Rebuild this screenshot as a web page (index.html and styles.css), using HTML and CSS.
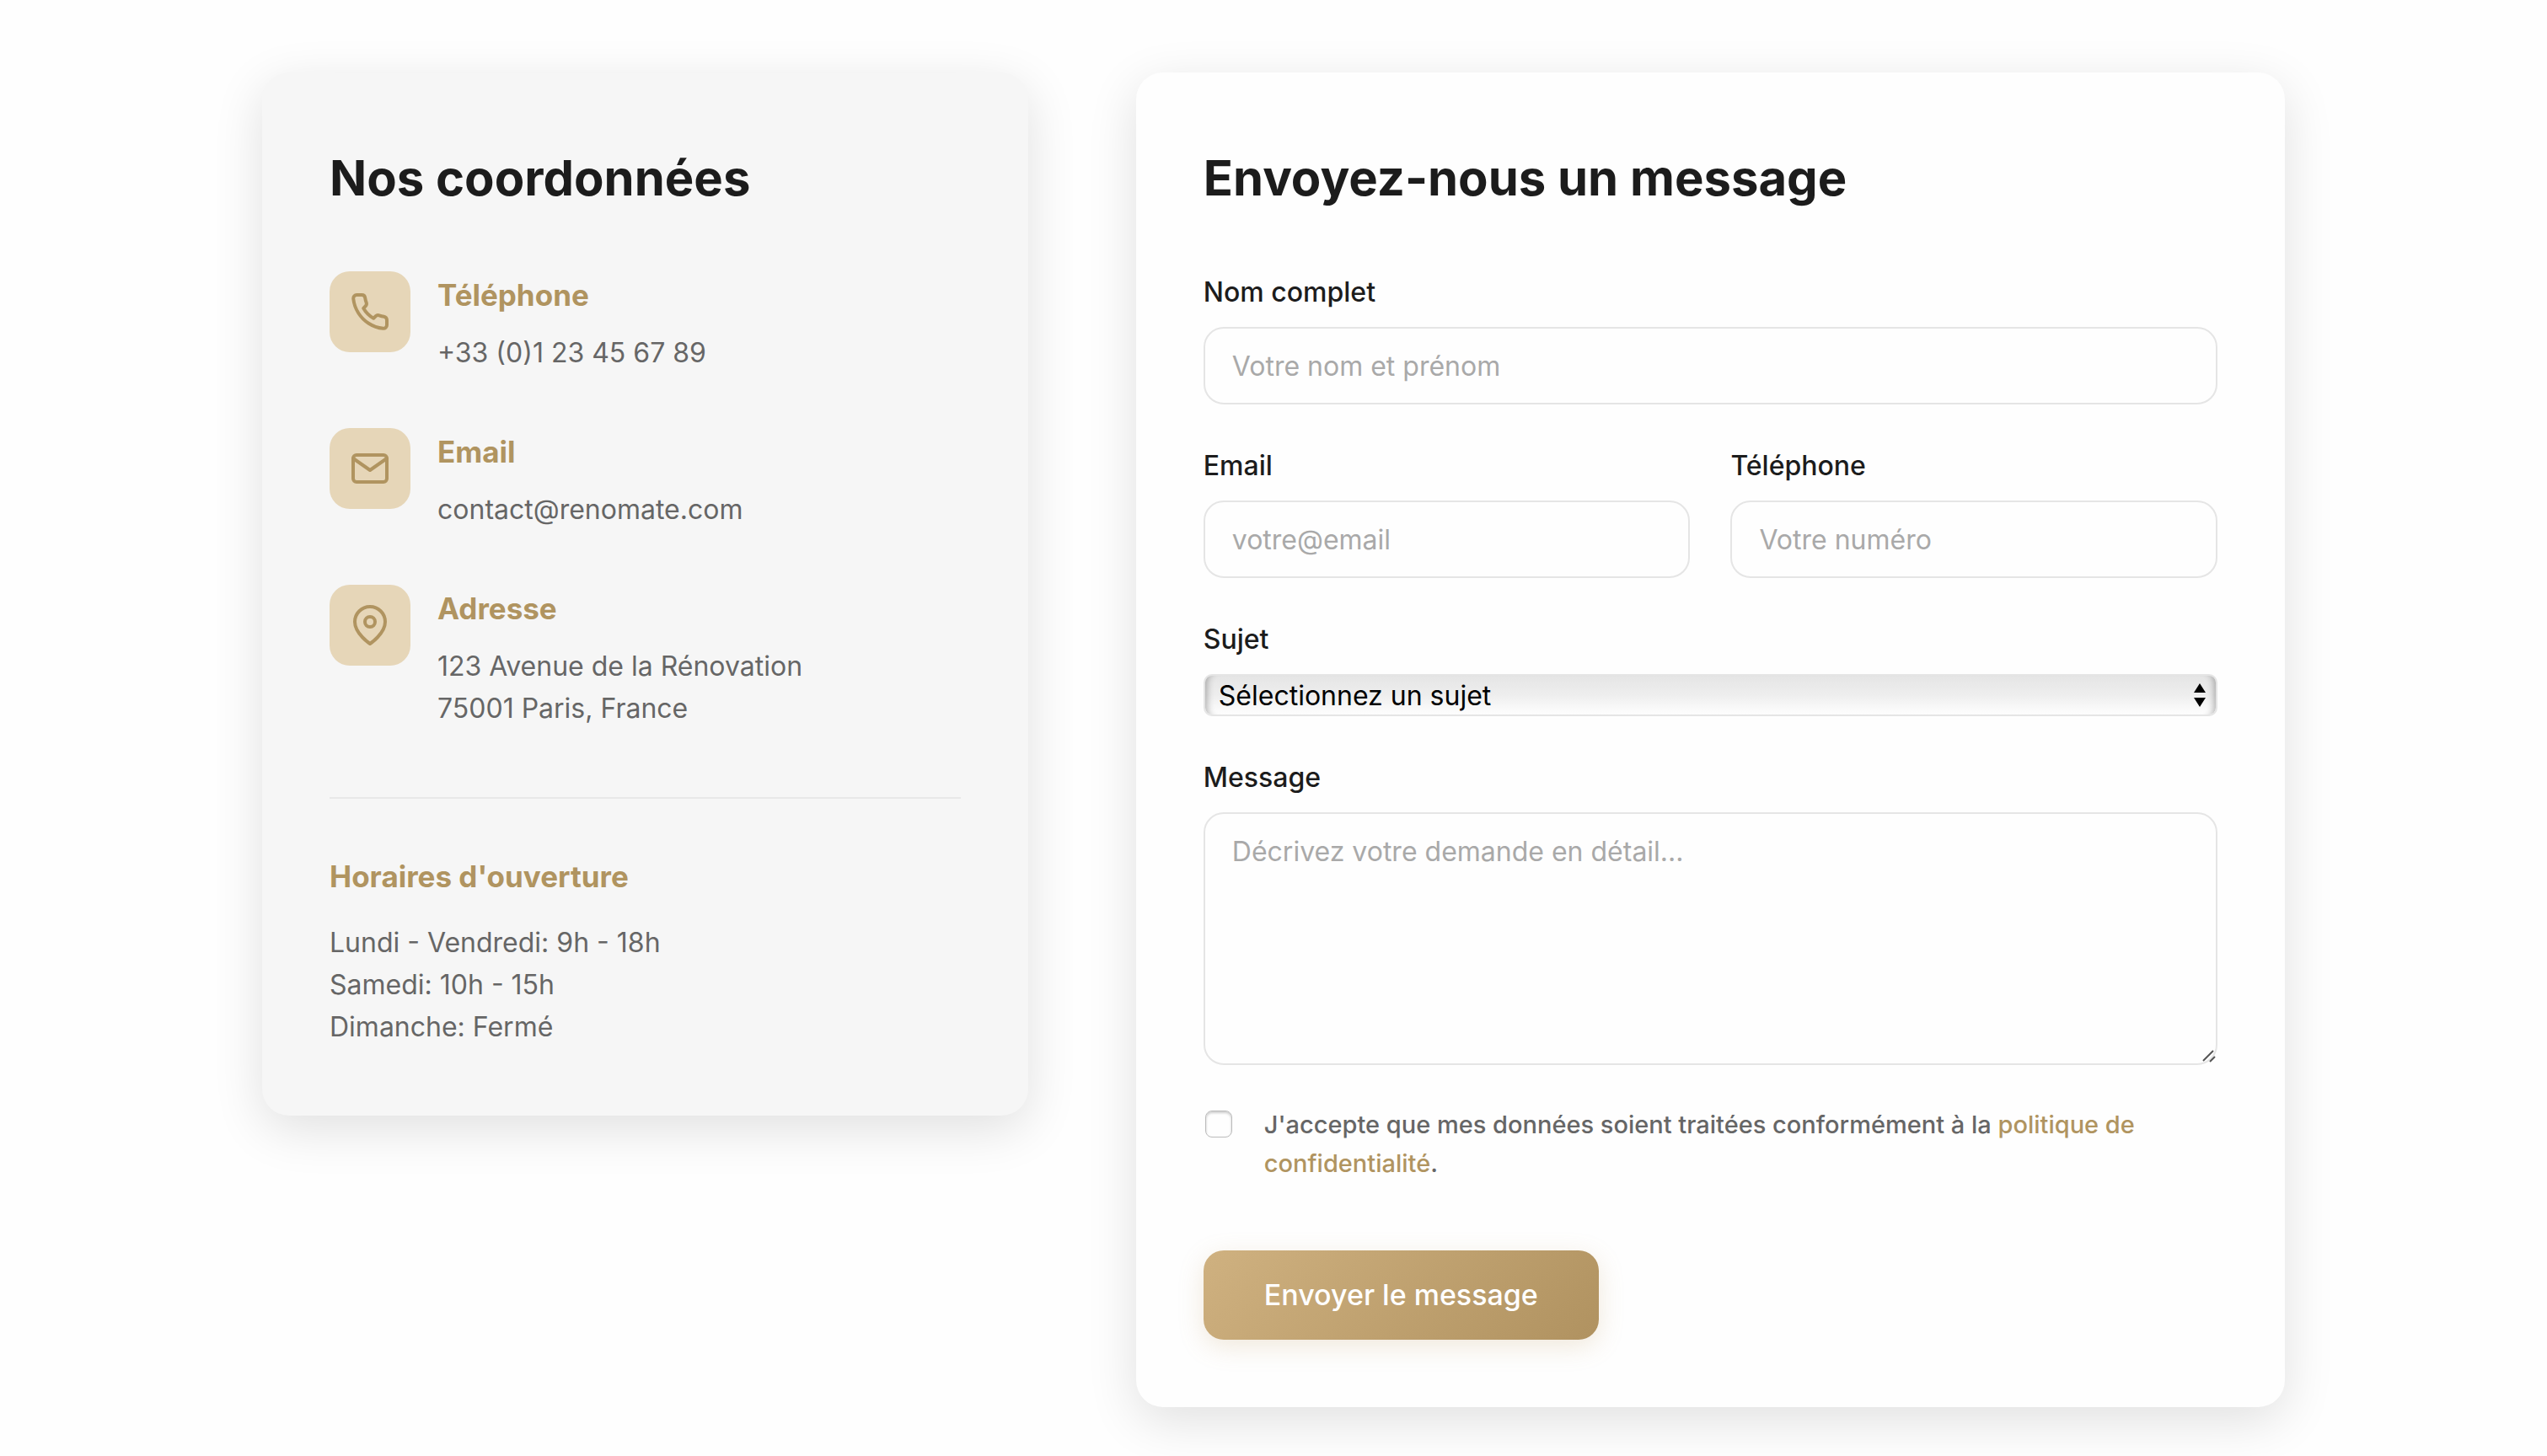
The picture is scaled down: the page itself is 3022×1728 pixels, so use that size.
FILE: index.html
```html
<!DOCTYPE html>
<html lang="fr">
<head>
    <meta charset="UTF-8">
    <meta name="viewport" content="width=device-width, initial-scale=1.0">
    <title>Contact - Renomate</title>
    <link rel="stylesheet" href="styles.css">
</head>
<body>
    <main class="contact-container">
        <!-- Contact details -->
        <section class="contact-card contact-info">
            <h2>Nos coordonnées</h2>

            <div class="info-list">
                <div class="info-item">
                    <div class="info-icon">
                        <svg viewBox="0 0 24 24" aria-hidden="true">
                            <path d="M22 16.92v3a2 2 0 0 1-2.18 2 19.79 19.79 0 0 1-8.63-3.07 19.5 19.5 0 0 1-6-6 19.79 19.79 0 0 1-3.07-8.67A2 2 0 0 1 4.11 2h3a2 2 0 0 1 2 1.72 12.84 12.84 0 0 0 .7 2.81 2 2 0 0 1-.45 2.11L8.09 9.91a16 16 0 0 0 6 6l1.27-1.27a2 2 0 0 1 2.11-.45 12.84 12.84 0 0 0 2.81.7A2 2 0 0 1 22 16.92z"/>
                        </svg>
                    </div>
                    <div>
                        <h3>Téléphone</h3>
                        <p>+33 (0)1 23 45 67 89</p>
                    </div>
                </div>

                <div class="info-item">
                    <div class="info-icon">
                        <svg viewBox="0 0 24 24" aria-hidden="true">
                            <path d="M4 4h16c1.1 0 2 .9 2 2v12c0 1.1-.9 2-2 2H4c-1.1 0-2-.9-2-2V6c0-1.1.9-2 2-2z"/>
                            <polyline points="22,6 12,13 2,6"/>
                        </svg>
                    </div>
                    <div>
                        <h3>Email</h3>
                        <p>contact@renomate.com</p>
                    </div>
                </div>

                <div class="info-item">
                    <div class="info-icon">
                        <svg viewBox="0 0 24 24" aria-hidden="true">
                            <path d="M21 10c0 7-9 13-9 13s-9-6-9-13a9 9 0 0 1 18 0z"/>
                            <circle cx="12" cy="10" r="3"/>
                        </svg>
                    </div>
                    <div>
                        <h3>Adresse</h3>
                        <p>123 Avenue de la Rénovation<br>75001 Paris, France</p>
                    </div>
                </div>
            </div>

            <div class="opening-hours">
                <h3>Horaires d'ouverture</h3>
                <p>Lundi - Vendredi: 9h - 18h</p>
                <p>Samedi: 10h - 15h</p>
                <p>Dimanche: Fermé</p>
            </div>
        </section>

        <!-- Contact form -->
        <section class="contact-card">
            <h2>Envoyez-nous un message</h2>

            <form class="contact-form">
                <div class="form-group">
                    <label for="name">Nom complet</label>
                    <input type="text" id="name" name="name" placeholder="Votre nom et prénom">
                </div>

                <div class="form-row">
                    <div class="form-group">
                        <label for="email">Email</label>
                        <input type="email" id="email" name="email" placeholder="votre@email">
                    </div>
                    <div class="form-group">
                        <label for="phone">Téléphone</label>
                        <input type="tel" id="phone" name="phone" placeholder="Votre numéro">
                    </div>
                </div>

                <div class="form-group">
                    <label for="subject">Sujet</label>
                    <div class="select-wrap">
                        <select id="subject" name="subject">
                            <option>Sélectionnez un sujet</option>
                        </select>
                        <svg class="select-arrows" viewBox="0 0 14 28" aria-hidden="true">
                            <path d="M7 0l7 11H0zM7 28l7-11H0z"/>
                        </svg>
                    </div>
                </div>

                <div class="form-group">
                    <label for="message">Message</label>
                    <div class="textarea-wrap">
                        <textarea id="message" name="message" placeholder="Décrivez votre demande en détail..."></textarea>
                        <svg class="resize-grip" viewBox="0 0 16 16" aria-hidden="true">
                            <path d="M1 13L13 1M9 14L15 8"/>
                        </svg>
                    </div>
                </div>

                <div class="form-checkbox">
                    <input type="checkbox" id="privacy" name="privacy">
                    <label for="privacy">J'accepte que mes données soient traitées conformément à la <a href="#">politique de confidentialité</a>.</label>
                </div>

                <button type="submit" class="btn-submit">Envoyer le message</button>
            </form>
        </section>
    </main>
</body>
</html>
```

FILE: styles.css
```css
/* Basic reset */
* {
    margin: 0;
    padding: 0;
    box-sizing: border-box;
}

body {
    font-family: Inter, 'Helvetica Neue', Arial, sans-serif;
    font-size: 32px;
    line-height: 50px;
    background-color: #fefefe;
    color: #1c1c1c;
}

.contact-container {
    display: grid;
    grid-template-columns: 1fr 1.5fr;
    align-items: start;
    gap: 128px;
    max-width: 2400px;
    margin: 0 auto;
    padding: 86px 0 58px;
}

.contact-card {
    padding: 80px;
    background-color: #fefefe;
    border-radius: 32px;
    box-shadow: 0 16px 60px rgba(0, 0, 0, 0.12);
}

.contact-info {
    background-color: #f6f6f6;
}

h2 {
    font-size: 58px;
    line-height: 90px;
    font-weight: 700;
    margin-bottom: 66px;
}

h3 {
    font-size: 35px;
    line-height: 56px;
    font-weight: 700;
    margin-bottom: 16px;
    color: #b09460;
}

p {
    color: #666;
}

/* Contact details */
.info-list {
    display: flex;
    flex-direction: column;
    gap: 64px;
}

.info-item {
    display: flex;
    align-items: flex-start;
    gap: 32px;
}

.info-icon {
    display: flex;
    align-items: center;
    justify-content: center;
    flex-shrink: 0;
    width: 96px;
    height: 96px;
    border-radius: 24px;
    background-color: #e6d6b8;
}

.info-icon svg {
    width: 48px;
    height: 48px;
    fill: none;
    stroke: #b09460;
    stroke-width: 2;
    stroke-linecap: round;
    stroke-linejoin: round;
}

.opening-hours {
    margin-top: 80px;
    padding-top: 64px;
    border-top: 2px solid #e8e8e8;
}

.opening-hours h3 {
    margin-bottom: 26px;
}

/* Form */
.contact-form {
    display: flex;
    flex-direction: column;
    gap: 48px;
}

.form-row {
    display: grid;
    grid-template-columns: 1fr 1fr;
    gap: 48px;
}

.form-group label {
    display: block;
    font-weight: 500;
    margin-bottom: 16px;
}

input,
select,
textarea,
button {
    font-family: inherit;
    font-size: 32px;
}

.form-group input,
.form-group textarea {
    display: block;
    width: 100%;
    padding: 20px 32px;
    border: 2px solid #e5e5e5;
    border-radius: 24px;
    background-color: #fefefe;
    color: #1c1c1c;
}

.form-group input {
    height: 92px;
}

.form-group textarea {
    height: 300px;
    line-height: 50px;
    resize: none;
}

.form-group ::placeholder {
    color: #a9a9a9;
}

.select-wrap,
.textarea-wrap {
    position: relative;
}

select {
    display: block;
    appearance: none;
    width: 100%;
    height: 50px;
    padding: 0 48px 0 16px;
    border: 2px solid #e5e5e5;
    border-radius: 10px;
    background: linear-gradient(#e5e5e5, #eee 50%, #fefefe);
    box-shadow: inset 10px 0 8px -8px rgba(0, 0, 0, 0.3), inset -10px 0 8px -8px rgba(0, 0, 0, 0.3);
    color: #000;
}

.select-arrows {
    position: absolute;
    top: 11px;
    right: 14px;
    width: 14px;
    height: 28px;
    pointer-events: none;
}

.resize-grip {
    position: absolute;
    right: 2px;
    bottom: 2px;
    width: 16px;
    height: 16px;
    fill: none;
    stroke: #555;
    stroke-width: 2;
    pointer-events: none;
}

.form-checkbox {
    display: flex;
    align-items: flex-start;
    gap: 36px;
    margin-bottom: 32px;
}

.form-checkbox input {
    appearance: none;
    flex-shrink: 0;
    width: 32px;
    height: 32px;
    margin: 6px 2px;
    border: 1px solid #bbb;
    border-radius: 8px;
    box-shadow: inset 0 2px 3px rgba(0, 0, 0, 0.2);
}

.form-checkbox label {
    font-size: 29px;
    line-height: 46px;
    font-weight: 500;
    color: #666;
}

.form-checkbox a {
    color: #b09460;
    text-decoration: none;
}

.btn-submit {
    align-self: flex-start;
    padding: 24px 72px;
    border: none;
    border-radius: 24px;
    background: linear-gradient(135deg, #cfb180, #b09260);
    box-shadow: 0 8px 30px rgba(190, 155, 95, 0.22);
    color: #fff;
    font-size: 34px;
    line-height: 58px;
    font-weight: 500;
    cursor: pointer;
}
```
